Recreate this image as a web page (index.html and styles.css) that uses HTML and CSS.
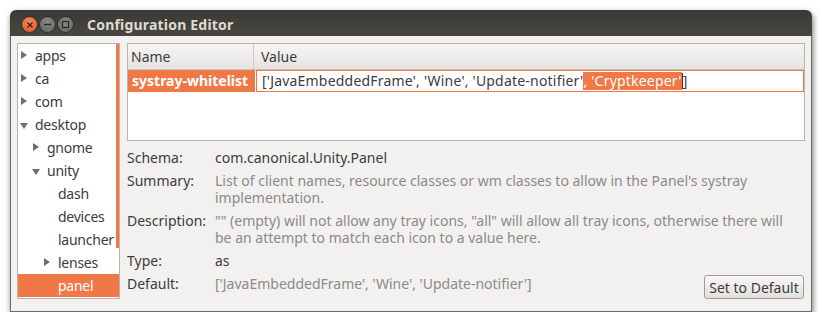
FILE: index.html
```html
<!DOCTYPE html>
<html>
<head>
<meta charset="utf-8">
<link rel="stylesheet" href="styles.css">
</head>
<body>
<div class="window">
  <div class="titlebar">
    <div class="wbtns">
      <span class="wbtn close"><svg width="8" height="8" viewBox="0 0 8 8"><path d="M1.5 1.5 L6.5 6.5 M6.5 1.5 L1.5 6.5" stroke="#3a1a0e" stroke-width="1.3" fill="none"/></svg></span>
      <span class="wbtn"><svg width="9" height="9" viewBox="0 0 9 9"><path d="M1 4.5 H8" stroke="#2c2b28" stroke-width="1.4"/></svg></span>
      <span class="wbtn"><svg width="9" height="9" viewBox="0 0 9 9"><rect x="1.5" y="1.5" width="6" height="6" stroke="#2c2b28" stroke-width="1.2" fill="none"/></svg></span>
    </div>
    <div class="title">Configuration Editor</div>
  </div>
  <div class="content">
    <div class="tree">
      <div class="tree-rows">
        <div class="row l0"><span class="arr right"></span>apps</div>
        <div class="row l0"><span class="arr right"></span>ca</div>
        <div class="row l0"><span class="arr right"></span>com</div>
        <div class="row l0"><span class="arr down"></span>desktop</div>
        <div class="row l1"><span class="arr right"></span>gnome</div>
        <div class="row l1"><span class="arr down"></span>unity</div>
        <div class="row l2"><span class="arr none"></span>dash</div>
        <div class="row l2"><span class="arr none"></span>devices</div>
        <div class="row l2"><span class="arr none"></span>launcher</div>
        <div class="row l2"><span class="arr right"></span>lenses</div>
        <div class="row l2 sel"><span class="arr none"></span>panel</div>
      </div>
      <div class="scrollbar"></div>
    </div>
    <div class="main">
      <div class="table">
        <div class="thead">
          <div class="th name">Name</div>
          <div class="th value">Value</div>
        </div>
        <div class="trow">
          <div class="td name">systray-whitelist</div>
          <div class="td value"><span>['JavaEmbeddedFrame', 'Wine', 'Update-notifier'</span><span class="hl">, 'Cryptkeeper'</span><span class="caret"></span><span>]</span></div>
        </div>
      </div>
      <div class="info">
        <div class="irow"><div class="lab">Schema:</div><div class="val dark">com.canonical.Unity.Panel</div></div>
        <div class="irow"><div class="lab">Summary:</div><div class="val">List of client names, resource classes or wm classes to allow in the Panel's systray implementation.</div></div>
        <div class="irow"><div class="lab">Description:</div><div class="val">"" (empty) will not allow any tray icons, "all" will allow all tray icons, otherwise there will be an attempt to match each icon to a value here.</div></div>
        <div class="irow"><div class="lab">Type:</div><div class="val dark">as</div></div>
        <div class="irow last"><div class="lab">Default:</div><div class="val">['JavaEmbeddedFrame', 'Wine', 'Update-notifier']</div><button class="btn">Set to Default</button></div>
      </div>
    </div>
  </div>
</div>
</body>
</html>
```
FILE: styles.css
```css
html, body { margin: 0; padding: 0; background: #ffffff; }
body { font-family: "Noto Sans", "DejaVu Sans", sans-serif; font-size: 14px; color: #3c3c3c; }

.window {
  margin: 10px 0 0 10px;
  width: 802px;
  box-shadow: 1px 3px 6px rgba(0,0,0,0.55);
  border-radius: 6px 6px 0 0;
}
.titlebar {
  height: 26px;
  background: linear-gradient(#3a3935, #47463f);
  border-radius: 6px 6px 0 0;
  display: flex;
  align-items: center;
}
.wbtns { display: flex; gap: 3px; margin-left: 12px; margin-top: 3px; }
.wbtn {
  width: 15px; height: 15px; border-radius: 50%;
  background: radial-gradient(circle at 50% 35%, #8a8883, #64625d);
  display: flex; align-items: center; justify-content: center;
  box-shadow: 0 0 0 1px rgba(0,0,0,0.25);
}
.wbtn.close { background: radial-gradient(circle at 50% 35%, #f48b5a, #de4f1e); }
.title {
  margin-left: 14px; margin-top: 2px;
  font-weight: bold; font-size: 14px; color: #dfdbd2; letter-spacing: 0.2px;
}
.content {
  background: #f2f1f0;
  border: 1px solid #6b6964;
  border-top: none;
  height: 276px;
  box-sizing: border-box;
  padding: 7px 6px 0 6px;
  display: flex;
  gap: 7px;
}
.tree {
  width: 103px; height: 256px; box-sizing: border-box;
  background: #fff; border: 1px solid #b9b5ae;
  position: relative;
}
.tree-rows { display: flex; flex-direction: column; }
.row { height: 23px; line-height: 23px; display: flex; align-items: center; color: #3c3c3c; font-size: 14px; letter-spacing: -0.25px; }
.row.l0 { padding-left: 2px; }
.row.l1 { padding-left: 14px; }
.row.l2 { padding-left: 25px; }
.row.sel { background: #f07746; color: #fff; }
.arr { width: 15px; height: 23px; flex: none; position: relative; }
.arr.right::before {
  content: ""; position: absolute; left: 1px; top: 7px;
  border-left: 6px solid #6f6f6f; border-top: 4.5px solid transparent; border-bottom: 4.5px solid transparent;
}
.arr.down::before {
  content: ""; position: absolute; left: 0px; top: 10px;
  border-top: 6px solid #6f6f6f; border-left: 4.5px solid transparent; border-right: 4.5px solid transparent;
}
.scrollbar {
  position: absolute; right: 0; top: 0; width: 3px; height: 204px; background: #f07746;
}
.main { flex: 1; display: flex; flex-direction: column; }
.table {
  height: 98px; box-sizing: border-box; background: #fff; border: 1px solid #b9b5ae;
}
.thead { display: flex; height: 25px; background: linear-gradient(#f6f5f4, #e5e3e0); border-bottom: 1px solid #c8c4bd; }
.th { line-height: 25px; color: #3c3c3c; font-size: 14px; }
.th.name { width: 126px; padding-left: 3px; box-sizing: border-box; border-right: 1px solid #cfcbc4; }
.th.value { padding-left: 7px; }
.trow { display: flex; height: 22px; }
.td.name { width: 127px; background: #f07746; color: #fff; font-weight: bold; font-size: 14px; line-height: 22px; padding-left: 4px; box-sizing: border-box; }
.td.value { flex: 1; border: 1px solid #f07746; background: #fff; line-height: 20px; padding-left: 5px; font-size: 14px; display: flex; align-items: center; margin-left: 1px; letter-spacing: 0.2px; }
.hl { background: #f07746; color: #fff; line-height: 18px; }
.caret { width: 1px; height: 16px; background: #333; }
.info { display: flex; flex-direction: column; gap: 6px; margin-top: 8px; }
.irow { display: flex; line-height: 17px; }
.lab { width: 88px; flex: none; color: #3c3c3c; }
.val { flex: 1; color: #8c8a87; padding-right: 12px; }
.val.dark { color: #3c3c3c; }
.irow.last { align-items: flex-start; }
.btn {
  font-family: inherit; font-size: 14px; color: #3c3c3c;
  height: 24px; width: 100px; padding: 0; margin-right: 1px;
  border: 1px solid #a09c95; border-radius: 3px;
  background: linear-gradient(#f9f8f7, #e2e0dd);
}
```
